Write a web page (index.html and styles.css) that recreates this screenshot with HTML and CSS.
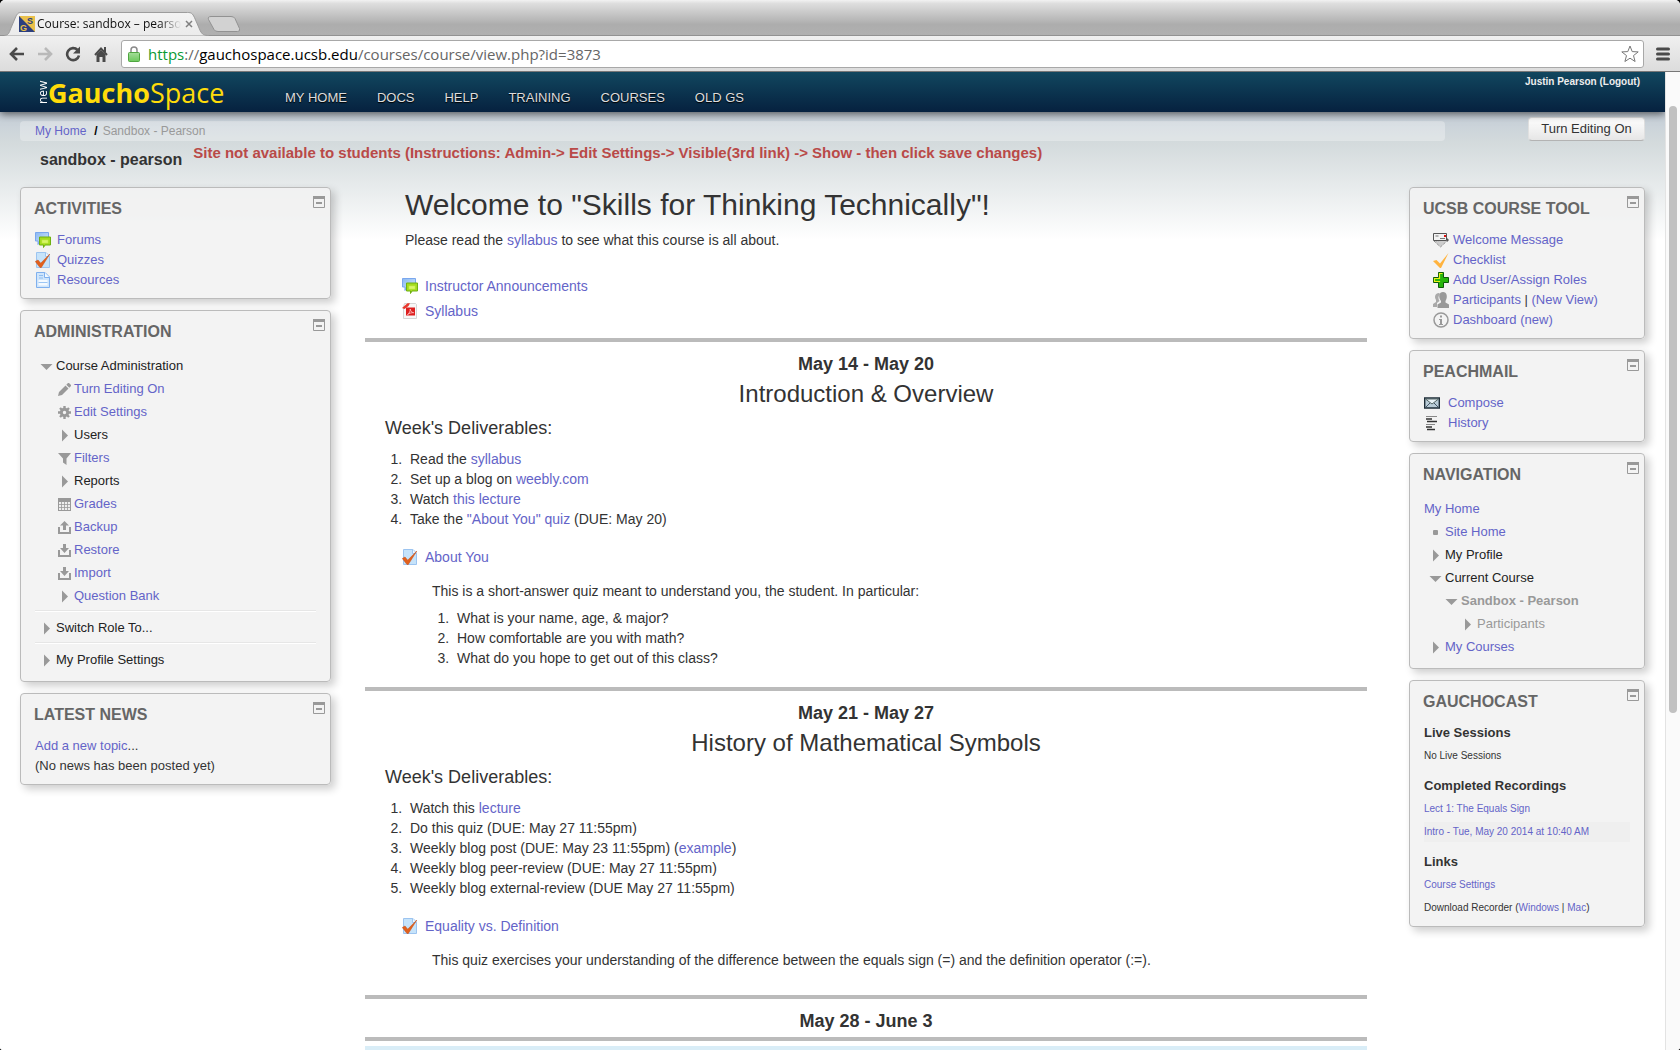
FILE: index.html
```html
<!DOCTYPE html>
<html lang="en">
	<head>
		<meta charset="utf-8">
		<meta name="viewport" content="width=device-width,initial-scale=1.0">
		<title>Course: sandbox - pearson</title>
		<link rel="stylesheet" href="styles.css">
	</head>
	<body>
		<!-- icon sprite -->
		<svg class="sprite" aria-hidden="true">
			<defs>
				<linearGradient id="sky" x1="0" y1="0" x2="1" y2="1">
					<stop offset="0" stop-color="#8ab8f2"/>
					<stop offset="1" stop-color="#d4e8fb"/>
				</linearGradient>
				<linearGradient id="lockfill" x1="0" y1="0" x2="0" y2="1">
					<stop offset="0" stop-color="#a5dd9a"/>
					<stop offset="1" stop-color="#6cc85c"/>
				</linearGradient>
				<linearGradient id="tabfill" x1="0" y1="0" x2="0" y2="1">
					<stop offset="0" stop-color="#f3f3f3"/>
					<stop offset="1" stop-color="#ebebeb"/>
				</linearGradient>
			</defs>
			<symbol id="forum" viewBox="0 0 16 16">
				<path d="M.5 .5h13v8.500h-9L3 12.500V9H.5z" fill="url(#sky)" stroke="#7aa7ee"/>
				<path d="M4.500 5h11v8h-5.500l-1.500 2.500V13h-4z" fill="#a4dc1e" stroke="#6fb012"/>
				<rect x="7" y="8" width="6" height="3" fill="#d8f56a" stroke="#c5ee4a" stroke-width=".6"/>
			</symbol>
			<symbol id="quiz" viewBox="0 0 16 16">
				<path d="M1.500 .5H11l3.500 3.500v11.500h-13z" fill="#c6e3fa" stroke="#9cc4f0"/>
				<path d="M10.500 .5v4h4" fill="#eef7ff" stroke="#9cc4f0"/>
				<path d="M.3 9.500L3 8l2.700 3.200L14.800 2 6.300 15.500H5z" fill="#e2601c" stroke="#c64d10" stroke-width=".5"/>
			</symbol>
			<symbol id="page" viewBox="0 0 16 16">
				<path d="M1.500 .5H10l4.500 4.500v10.500h-13z" fill="#cfe5fb" stroke="#7fb0ee"/>
				<path d="M9.500 .5v5h5" fill="#f3f9ff" stroke="#7fb0ee"/>
				<path d="M4 3.500h4M4 6h4" stroke="#8fbdf0"/>
				<rect x="3.500" y="8" width="9" height="5.500" fill="#f5faff"/>
				<path d="M3.500 10.500h9" stroke="#9cc6f4"/>
			</symbol>
			<symbol id="pdf" viewBox="0 0 16 16">
				<path d="M2.500 .5h11l1 1v14h-13V4z" fill="#f7f7f7" stroke="#d5d5d5"/>
				<path d="M0 5L5.500 .3H8L6.500 3 2.500 6z" fill="#e8392e"/>
				<rect x="4" y="4.500" width="9" height="8" fill="#dd1f1f"/>
				<path d="M5.500 11.500c2-1 3-4 2.700-5.500.5 2.500 1.800 3.500 3.500 3.700-2-.2-4 .5-6.200 1.800z" fill="none" stroke="#ffc9c9" stroke-width=".8"/>
			</symbol>
			<symbol id="down" viewBox="0 0 13 13"><path d="M.5 4h12l-6 6z" fill="#999"/></symbol>
			<symbol id="right" viewBox="0 0 13 13"><path d="M4 .5l6 6-6 6z" fill="#999"/></symbol>
			<symbol id="bullet" viewBox="0 0 13 13"><rect x="4" y="4" width="5" height="5" rx="1" fill="#999"/></symbol>
			<symbol id="pencil" viewBox="0 0 13 13">
				<path d="M0 13l1-4 6.500-6.500 3 3L4 12zM8.300 1.700L10 0q.5-.3 1 0l2 2q.3.5 0 1l-1.700 1.700z" fill="#999"/>
			</symbol>
			<symbol id="gear" viewBox="0 0 13 13">
				<circle cx="6.500" cy="6.500" r="3.200" fill="none" stroke="#999" stroke-width="3"/>
				<path d="M6.500 0v3M6.500 10v3M0 6.500h3M10 6.500h3M2 2l2 2M9 9l2 2M11 2L9 4M4 9l-2 2" stroke="#999" stroke-width="2.400"/>
			</symbol>
			<symbol id="filter" viewBox="0 0 13 13"><path d="M0 1h13L8.500 6.500V13L5 10.500v-4z" fill="#999"/></symbol>
			<symbol id="table" viewBox="0 0 13 13">
				<path d="M0 0h13v13H0z" fill="#999"/>
				<path d="M1 4h11v8H1z" fill="#eee"/>
				<path d="M1 6.500h11M1 9.500h11M3.500 4v8M6.500 4v8M9.500 4v8" stroke="#999" stroke-width=".8"/>
			</symbol>
			<symbol id="upload" viewBox="0 0 13 13">
				<path d="M1 6v6h11V6" fill="none" stroke="#999" stroke-width="2"/>
				<path d="M6.500 0L11 4.500H8V9H5V4.500H2z" fill="#999"/>
			</symbol>
			<symbol id="download" viewBox="0 0 13 13">
				<path d="M1 6v6h11V6" fill="none" stroke="#999" stroke-width="2"/>
				<path d="M5 0h3v4h3L6.500 9 2 4h3z" fill="#999"/>
			</symbol>
			<symbol id="welcome" viewBox="0 0 16 16">
				<path d="M1 9l6.500 6L15 8z" fill="#ccc" stroke="#777" stroke-dasharray="1 1"/>
				<path d="M.5 1.500h13v7H.5z" fill="#f2f2f2" stroke="#555"/>
				<path d="M14 6l2 2-2 2z" fill="#555"/>
				<path d="M2.500 4h3M7 6.500h5" stroke="#777"/>
				<path d="M11 3h2v2h-2z" fill="#e01010"/>
			</symbol>
			<symbol id="check" viewBox="0 0 16 16"><path d="M0 9l3.500-1L7 11.500 15.500 1 8 16H7z" fill="#ffb33e"/></symbol>
			<symbol id="plus" viewBox="0 0 16 16">
				<path d="M5.500 .5h5v5h5v5h-5v5h-5v-5h-5v-5h5z" fill="#27b50c" stroke="#0b5a08"/>
				<path d="M6.500 10V9.500h-5v-3h5v-5h3" fill="none" stroke="#e9f21a" stroke-width="1.200"/>
			</symbol>
			<symbol id="people" viewBox="0 0 16 16">
				<path d="M0 15v-3l3-2V8C1 5 2 1 6 1l1 1C5 4 5 7 6.500 9L4 11v4z" fill="#aaa"/>
				<path d="M4.500 16v-3.500l3.500-2V9C5 5 6 0 10 0s5 5 2.500 9v1.500l3.500 2V16z" fill="#999"/>
			</symbol>
			<symbol id="info" viewBox="0 0 16 16">
				<circle cx="8" cy="8" r="7" fill="none" stroke="#999" stroke-width="1.500"/>
				<path d="M7 3.500h2v2H7zM6 7h3v5h1v1H6v-1h1V8H6z" fill="#999"/>
			</symbol>
			<symbol id="mail" viewBox="0 0 16 16">
				<path d="M.7 3h14.600v10H.7z" fill="#b9ccd8" stroke="#1e2d38" stroke-width="1.400"/>
				<path d="M1.500 4l6.500 5 6.500-5z" fill="#eaf3f8" stroke="#566"/>
				<path d="M1.500 12.500L6 8M14.500 12.500L10 8" stroke="#456"/>
			</symbol>
			<symbol id="lines" viewBox="0 0 16 16">
				<path d="M2 1.500h11M2 9.500h9" stroke="#888"/>
				<path d="M2 4h6M3 6.500h10M2 12h6M3 14.500h8" stroke="#333" stroke-width="1.300"/>
			</symbol>
			<symbol id="minus" viewBox="0 0 12 12">
				<path d="M.5 1h11v10.500H.5z" fill="none" stroke="#999"/>
				<path d="M0 0h12v3H0zM3 6h6v2H3z" fill="#999"/>
			</symbol>
		</svg>

		<header class="browser">
			<div class="tabs">
				<div class="tab">
					<svg class="tab-shape" viewBox="0 0 210 25" preserveAspectRatio="none">
						<path d="M0 24.500C5 24 5 22 7 17l5-12C14 1 15 .5 18 .5h170c4 0 5 1 7 5l6 14c2 4 4 5 9 5V25H0z" fill="url(#tabfill)" stroke="#999"/>
					</svg>
					<svg class="favicon" viewBox="0 0 16 16">
						<path d="M0 0h16v16H0z" fill="#e9c04a"/>
						<path d="M0 0v16h16z" fill="#2c3f7e"/>
						<text x="8" y="8" class="fav-s">S</text>
						<text x="1" y="15" class="fav-g">G</text>
					</svg>
					<span class="tab-title">Course: sandbox – pearson</span>
					<button class="tab-close" aria-label="Close tab"><svg viewBox="0 0 8 8"><path d="M1 1l6 6M7 1L1 7" stroke="#808080" stroke-width="1.500"/></svg></button>
				</div>
				<button class="new-tab" aria-label="New tab">
					<svg viewBox="0 0 34 18"><path d="M4 1.500h20q3 0 4 2l4.500 10q1 3-2 3H11q-3 0-4-2L1.500 4.500q-1-3 2.500-3z" fill="#d2d2d2" stroke="#929292"/></svg>
				</button>
			</div>
			<div class="toolbar">
				<button class="tool" aria-label="Back"><svg viewBox="0 0 16 16"><path d="M15 8H3M8 2L2 8l6 6" fill="none" stroke="#4a4a4a" stroke-width="2.600"/></svg></button>
				<button class="tool" aria-label="Forward"><svg viewBox="0 0 16 16"><path d="M1 8h12M8 2l6 6-6 6" fill="none" stroke="#b9b9b9" stroke-width="2.600"/></svg></button>
				<button class="tool" aria-label="Reload"><svg viewBox="0 0 16 16"><path d="M12.500 4A6 6 0 1 0 14 9.500" fill="none" stroke="#4a4a4a" stroke-width="2.600"/><path d="M15 .5v7H8z" fill="#4a4a4a"/></svg></button>
				<button class="tool" aria-label="Home"><svg viewBox="0 0 16 16"><path d="M2 9l6-6.500L14 9M12 1v5" fill="none" stroke="#4a4a4a" stroke-width="2"/><path d="M3.500 8.500L8 4l4.500 4.500V16h-3v-5h-3v5h-3z" fill="#4a4a4a"/></svg></button>
				<div class="address">
					<svg class="lock" viewBox="0 0 12 16"><path d="M3 8V4a3 3 0 0 1 6 0v4" fill="none" stroke="#8a8a8a" stroke-width="1.500"/><rect x=".5" y="6.500" width="11" height="9" rx="1" fill="url(#lockfill)" stroke="#4fa640"/></svg>
					<div class="url" role="textbox" aria-label="Address" contenteditable="true" spellcheck="false"><span class="scheme">https</span>://<span class="host">gauchospace.ucsb.edu</span>/courses/course/view.php?id=3873</div>
					<svg class="star" viewBox="0 0 18 18"><path d="M9 1l2.200 5.600 6 .3-4.700 3.700 1.600 5.900L9 13.200l-5.100 3.300 1.600-5.900L.8 6.900l6-.3z" fill="#fff" stroke="#777" stroke-linejoin="round"/></svg>
				</div>
				<button class="menu" aria-label="Menu"><svg viewBox="0 0 14 14"><path d="M1.500 2h11M1.500 7h11M1.500 12h11" stroke="#4a4a4a" stroke-width="3" stroke-linecap="round"/></svg></button>
			</div>
		</header>

		<div class="viewport">
			<div class="page">
				<div class="navbar">
					<a class="logo" href="#"><span class="logo-new">new</span><b>Gaucho</b>Space</a>
					<nav class="menu-links">
						<a href="#">MY HOME</a>
						<a href="#">DOCS</a>
						<a href="#">HELP</a>
						<a href="#">TRAINING</a>
						<a href="#">COURSES</a>
						<a href="#">OLD GS</a>
					</nav>
					<div class="login">Justin Pearson (<a href="#">Logout</a>)</div>
				</div>

				<div class="content">
					<div class="crumb-row">
						<div class="breadcrumb"><a href="#">My Home</a><b>/</b><span>Sandbox - Pearson</span></div>
						<button class="edit-btn">Turn Editing On</button>
					</div>
					<div class="title-row">
						<h1>sandbox - pearson</h1>
						<p class="warning">Site not available to students (Instructions: Admin-&gt; Edit Settings-&gt; Visible(3rd link) -&gt; Show - then click save changes)</p>
					</div>

					<div class="columns">
						<aside class="side">
							<section class="block">
								<div class="head"><h2>ACTIVITIES</h2><button class="collapse" aria-label="Hide Activities"><svg><use href="#minus"/></svg></button></div>
								<ul class="list">
									<li><svg class="icon"><use href="#forum"/></svg><a href="#">Forums</a></li>
									<li><svg class="icon"><use href="#quiz"/></svg><a href="#">Quizzes</a></li>
									<li><svg class="icon"><use href="#page"/></svg><a href="#">Resources</a></li>
								</ul>
							</section>

							<section class="block">
								<div class="head"><h2>ADMINISTRATION</h2><button class="collapse" aria-label="Hide Administration"><svg><use href="#minus"/></svg></button></div>
								<div class="body">
									<ul class="tree admin">
										<li><svg><use href="#down"/></svg>Course Administration
											<ul>
												<li><svg><use href="#pencil"/></svg><a href="#">Turn Editing On</a></li>
												<li><svg><use href="#gear"/></svg><a href="#">Edit Settings</a></li>
												<li><svg><use href="#right"/></svg>Users</li>
												<li><svg><use href="#filter"/></svg><a href="#">Filters</a></li>
												<li><svg><use href="#right"/></svg>Reports</li>
												<li><svg><use href="#table"/></svg><a href="#">Grades</a></li>
												<li><svg><use href="#upload"/></svg><a href="#">Backup</a></li>
												<li><svg><use href="#download"/></svg><a href="#">Restore</a></li>
												<li><svg><use href="#download"/></svg><a href="#">Import</a></li>
												<li><svg><use href="#right"/></svg><a href="#">Question Bank</a></li>
											</ul>
										</li>
										<li class="rule"></li>
										<li><svg><use href="#right"/></svg>Switch Role To...</li>
										<li class="rule"></li>
										<li><svg><use href="#right"/></svg>My Profile Settings</li>
									</ul>
								</div>
							</section>

							<section class="block">
								<div class="head"><h2>LATEST NEWS</h2><button class="collapse" aria-label="Hide Latest News"><svg><use href="#minus"/></svg></button></div>
								<div class="body">
									<p><a href="#">Add a new topic</a>...</p>
									<p>(No news has been posted yet)</p>
								</div>
							</section>
						</aside>

						<main class="main">
							<section class="intro">
								<h2 class="welcome">Welcome to "Skills for Thinking Technically"!</h2>
								<p>Please read the <a href="#">syllabus</a> to see what this course is all about.</p>
								<div class="activity first"><svg class="icon"><use href="#forum"/></svg><a href="#">Instructor Announcements</a></div>
								<div class="activity"><svg class="icon"><use href="#pdf"/></svg><a href="#">Syllabus</a></div>
							</section>

							<section class="week">
								<h3>May 14 - May 20</h3>
								<h2>Introduction &amp; Overview</h2>
								<h4>Week's Deliverables:</h4>
								<ol>
									<li>Read the <a href="#">syllabus</a></li>
									<li>Set up a blog on <a href="#">weebly.com</a></li>
									<li>Watch <a href="#">this lecture</a></li>
									<li>Take the <a href="#">"About You" quiz</a> (DUE: May 20)</li>
								</ol>
								<div class="activity"><svg class="icon"><use href="#quiz"/></svg><a href="#">About You</a></div>
								<div class="about">
									<p>This is a short-answer quiz meant to understand you, the student. In particular:</p>
									<ol>
										<li>What is your name, age, &amp; major?</li>
										<li>How comfortable are you with math?</li>
										<li>What do you hope to get out of this class?</li>
									</ol>
								</div>
							</section>

							<section class="week">
								<h3>May 21 - May 27</h3>
								<h2>History of Mathematical Symbols</h2>
								<h4>Week's Deliverables:</h4>
								<ol>
									<li>Watch this <a href="#">lecture</a></li>
									<li>Do this quiz (DUE: May 27 11:55pm)</li>
									<li>Weekly blog post (DUE: May 23 11:55pm) (<a href="#">example</a>)</li>
									<li>Weekly blog peer-review (DUE: May 27 11:55pm)</li>
									<li>Weekly blog external-review (DUE May 27 11:55pm)</li>
								</ol>
								<div class="activity"><svg class="icon"><use href="#quiz"/></svg><a href="#">Equality vs. Definition</a></div>
								<div class="about last">
									<p>This quiz exercises your understanding of the difference between the equals sign (=) and the definition operator (:=).</p>
								</div>
							</section>

							<section class="week short">
								<h3>May 28 - June 3</h3>
							</section>
							<section class="week current"></section>
						</main>

						<aside class="side">
							<section class="block">
								<div class="head"><h2>UCSB COURSE TOOL</h2><button class="collapse" aria-label="Hide UCSB Course Tool"><svg><use href="#minus"/></svg></button></div>
								<ul class="list tools">
									<li><svg class="icon"><use href="#welcome"/></svg><a href="#">Welcome Message</a></li>
									<li><svg class="icon"><use href="#check"/></svg><a href="#">Checklist</a></li>
									<li><svg class="icon"><use href="#plus"/></svg><a href="#">Add User/Assign Roles</a></li>
									<li><svg class="icon"><use href="#people"/></svg><span><a href="#">Participants</a> | <a href="#">(New View)</a></span></li>
									<li><svg class="icon"><use href="#info"/></svg><a href="#">Dashboard (new)</a></li>
								</ul>
							</section>

							<section class="block">
								<div class="head"><h2>PEACHMAIL</h2><button class="collapse" aria-label="Hide Peachmail"><svg><use href="#minus"/></svg></button></div>
								<ul class="list mail">
									<li><svg class="icon"><use href="#mail"/></svg><a href="#">Compose</a></li>
									<li><svg class="icon"><use href="#lines"/></svg><a href="#">History</a></li>
								</ul>
							</section>

							<section class="block">
								<div class="head"><h2>NAVIGATION</h2><button class="collapse" aria-label="Hide Navigation"><svg><use href="#minus"/></svg></button></div>
								<div class="body">
									<ul class="tree nav">
										<li><a href="#">My Home</a>
											<ul>
												<li><svg><use href="#bullet"/></svg><a href="#">Site Home</a></li>
												<li><svg><use href="#right"/></svg>My Profile</li>
												<li><svg><use href="#down"/></svg>Current Course
													<ul class="dim">
														<li><svg><use href="#down"/></svg><b>Sandbox - Pearson</b>
															<ul>
																<li><svg><use href="#right"/></svg>Participants</li>
															</ul>
														</li>
													</ul>
												</li>
												<li><svg><use href="#right"/></svg><a href="#">My Courses</a></li>
											</ul>
										</li>
									</ul>
								</div>
							</section>

							<section class="block">
								<div class="head"><h2>GAUCHOCAST</h2><button class="collapse" aria-label="Hide Gauchocast"><svg><use href="#minus"/></svg></button></div>
								<div class="body cast">
									<h3>Live Sessions</h3>
									<p>No Live Sessions</p>
									<h3>Completed Recordings</h3>
									<p><a href="#">Lect 1: The Equals Sign</a></p>
									<p class="alt"><a href="#">Intro - Tue, May 20 2014 at 10:40 AM</a></p>
									<h3>Links</h3>
									<p><a href="#">Course Settings</a></p>
									<p>Download Recorder (<a href="#">Windows</a> | <a href="#">Mac</a>)</p>
								</div>
							</section>
						</aside>
					</div>
				</div>
			</div>
			<div class="scrollbar"><div class="thumb"></div></div>
		</div>
	</body>
</html>
```

FILE: styles.css
```css
* {
	box-sizing: border-box;
	margin: 0;
	padding: 0;
}

html {
	height: 100%;
	background: #000;
}

body {
	display: flex;
	flex-direction: column;
	height: 100vh;
	overflow: hidden;
	border-radius: 5px 5px 3px 3px;
	background: #fff;
	color: #333;
	font: 14px/20px "Liberation Sans", Arial, sans-serif;
}

a {
	color: #6464c8;
	text-decoration: none;
}

button {
	border: 0;
	background: none;
}

button svg {
	display: block;
	width: 100%;
	height: 100%;
}

ul, ol {
	list-style: none;
}

.sprite {
	position: absolute;
	width: 0;
	height: 0;
}

/* browser window */
.browser {
	flex: none;
	font-family: "Open Sans", "Noto Sans", sans-serif;
}

.tabs {
	display: flex;
	align-items: flex-end;
	height: 36px;
	padding-left: 4px;
	background: linear-gradient(#f2f2f2, #dedede 10%, #adadad 70%, #b0b0b0);
	border-bottom: 1px solid #929292;
}

.tab {
	position: relative;
	display: flex;
	align-items: center;
	width: 205px;
	height: 24px;
	margin-bottom: -1px;
	padding: 0 12px 0 15px;
}

.tab-shape {
	position: absolute;
	left: 0;
	top: 0;
	width: 100%;
	height: 100%;
}

.favicon {
	position: relative;
	flex: none;
	width: 16px;
	height: 16px;
}

.fav-s, .fav-g {
	font: bold 9px "Liberation Sans", sans-serif;
	fill: #2c3f7e;
}

.fav-g {
	fill: #e9c04a;
}

.tab-title {
	position: relative;
	flex: 1;
	margin-left: 2px;
	overflow: hidden;
	white-space: nowrap;
	font-size: 12px;
	color: #111;
	-webkit-mask-image: linear-gradient(90deg, #000 85%, transparent);
	mask-image: linear-gradient(90deg, #000 85%, transparent);
}

.tab-close {
	position: relative;
	width: 8px;
	height: 8px;
	margin: 0 4px 0 4px;
}

.new-tab {
	width: 34px;
	height: 18px;
	margin: 0 0 2px -2px;
}

.toolbar {
	display: flex;
	align-items: center;
	height: 36px;
	padding: 0 10px 0 9px;
	background: linear-gradient(#f0f0f0, #dcdcdc);
	border-bottom: 1px solid #777;
}

.tool {
	width: 16px;
	height: 16px;
	margin-right: 12px;
}

.address {
	display: flex;
	flex: 1;
	align-items: center;
	height: 28px;
	padding: 0 4px 0 6px;
	background: #fff;
	border: 1px solid #a8a8a8;
	border-radius: 3px;
}

.lock {
	width: 12px;
	height: 16px;
	margin-right: 8px;
}

.url {
	flex: 1;
	font-size: 15px;
	color: #666;
}

.scheme {
	color: #0a9a32;
}

.host {
	color: #000;
}

.star {
	width: 18px;
	height: 18px;
}

.menu {
	width: 14px;
	height: 14px;
	margin-left: 12px;
}

.viewport {
	display: flex;
	flex: 1;
	min-height: 0;
}

.page {
	flex: 1;
	overflow: hidden;
}

.scrollbar {
	position: relative;
	width: 15px;
	background: #fafafa;
	border-left: 1px solid #e3e3e3;
}

.thumb {
	position: absolute;
	top: 3.5%;
	left: 3px;
	width: 8px;
	height: 62%;
	border-radius: 4px;
	background: #c1c1c1;
}

/* site header */
.navbar {
	position: relative;
	display: flex;
	height: 40px;
	padding: 0 25px 0 37px;
	background: linear-gradient(#11475f, #06213f);
	box-shadow: 0 2px 8px rgba(0, 0, 0, .6);
}

.logo {
	display: flex;
	width: 248px;
	color: #ffdc0a;
	font: 27px/42px "Open Sans", "Noto Sans", sans-serif;
}

.logo-new {
	height: 32px;
	color: #fff;
	font-size: 12px;
	line-height: 11px;
	writing-mode: vertical-rl;
	transform: rotate(180deg);
}

.menu-links {
	display: flex;
	gap: 30px;
	flex: 1;
	padding-top: 16px;
	font-size: 13px;
}

.menu-links a {
	color: #ddd;
	text-shadow: 0 1px 1px #000;
}

.login {
	font-size: 10px;
	font-weight: bold;
	color: #eee;
}

.login a {
	color: #eee;
}

.content {
	padding: 5px 20px 0;
	background: linear-gradient(#c5ced8, #d3dadc 30px, #fff 128px);
}

.crumb-row {
	display: flex;
	align-items: flex-start;
	gap: 83px;
}

.breadcrumb {
	flex: 1;
	margin-top: 4px;
	padding-left: 15px;
	border-radius: 4px;
	background: rgba(255, 255, 255, .3);
	font-size: 12px;
	color: #999;
}

.breadcrumb b {
	margin: 0 5px 0 8px;
	color: #000;
}

.edit-btn {
	width: 117px;
	height: 24px;
	border: 1px solid #e0e0e0;
	border-bottom-color: #b3b3b3;
	border-radius: 4px;
	background: linear-gradient(#fff, #e6e6e6);
	color: #333;
	font: 13px/20px "Liberation Sans", Arial, sans-serif;
}

.title-row {
	display: flex;
	gap: 11px;
	padding: 2px 0 0 20px;
}

.title-row h1 {
	margin-top: 7px;
	font-size: 16px;
	line-height: 20px;
}

.warning {
	color: #b94a48;
	font-size: 15px;
	font-weight: bold;
}

.columns {
	display: grid;
	grid-template-columns: 311px 1fr 236px;
	margin-top: 17px;
}

/* side blocks */
.side {
	display: flex;
	flex-direction: column;
	gap: 11px;
	font-size: 13px;
}

.block {
	padding-bottom: 8px;
	border: 1px solid #bbb;
	border-radius: 4px;
	background: rgba(242, 242, 242, .9);
	box-shadow: 4px 4px 8px rgba(0, 0, 0, .2);
}

.head {
	display: flex;
	justify-content: space-between;
	align-items: flex-start;
	padding: 8px 5px 0 13px;
}

.head h2 {
	margin-top: 3px;
	font-size: 16px;
	line-height: 20px;
	color: #666;
}

.collapse {
	width: 12px;
	height: 12px;
}

.list {
	padding: 11px 14px 0;
}

.list li, .activity {
	display: flex;
	align-items: center;
	gap: 6px;
}

.icon {
	flex: none;
	width: 16px;
	height: 16px;
}

.tools {
	padding-left: 23px;
}

.tools li {
	gap: 4px;
}

.mail li {
	gap: 8px;
}

.body {
	padding: 11px 14px 0;
}

.tree {
	padding: 1px 0 2px;
	line-height: 23px;
	color: #222;
}

.admin {
	padding-left: 5px;
}

.tree svg {
	width: 13px;
	height: 13px;
	margin-right: 3px;
	vertical-align: -3px;
}

.admin ul {
	padding-left: 18px;
}

.nav ul {
	padding-left: 5px;
}

.nav ul ul {
	padding-left: 16px;
}

.nav .dim {
	color: #999;
}

.tree .rule {
	height: 2px;
	margin: 3px 0 4px -5px;
	border-top: 1px solid #e6e6e6;
	border-bottom: 1px solid #fff;
}

.cast h3 {
	margin-top: 10px;
	font-size: 13px;
	line-height: 20px;
}

.cast h3:first-child {
	margin-top: 0;
}

.cast p {
	margin-top: 3px;
	font-size: 10px;
}

.cast .alt {
	background: #efefef;
}

/* course content */
.main {
	margin: 0 42px 0 34px;
}

.intro {
	padding-bottom: 17px;
}

.welcome {
	margin-top: -2px;
	padding-left: 40px;
	font-size: 30px;
	line-height: 40px;
	font-weight: normal;
}

.intro p {
	margin-top: 5px;
	padding-left: 40px;
}

.activity {
	margin-top: 5px;
	padding-left: 37px;
	gap: 7px;
}

.activity.first {
	margin-top: 26px;
}

.week {
	border-top: 4px solid #bbb;
	padding-top: 12px;
}

.week h3 {
	font-size: 18px;
	line-height: 20px;
	text-align: center;
}

.week h2 {
	margin-top: 5px;
	font-size: 24px;
	line-height: 30px;
	font-weight: normal;
	text-align: center;
}

.week h4 {
	margin: 9px 0 11px 20px;
	font-size: 18px;
	line-height: 20px;
	font-weight: normal;
}

.week ol {
	margin-left: 20px;
	padding-left: 25px;
	list-style: decimal;
}

.week ol li::marker {
	content: counter(list-item) ".\00a0\00a0";
}

.week .activity {
	margin-top: 18px;
}

.about {
	margin: 14px 0 19px 67px;
}

.about.last {
	margin-bottom: 25px;
}

.about ol {
	margin: 7px 0 0;
}

.short {
	padding-bottom: 6px;
}

.current {
	padding-top: 5px;
}

.current::after {
	content: "";
	display: block;
	height: 60px;
	background: #d9edf7;
}
```
